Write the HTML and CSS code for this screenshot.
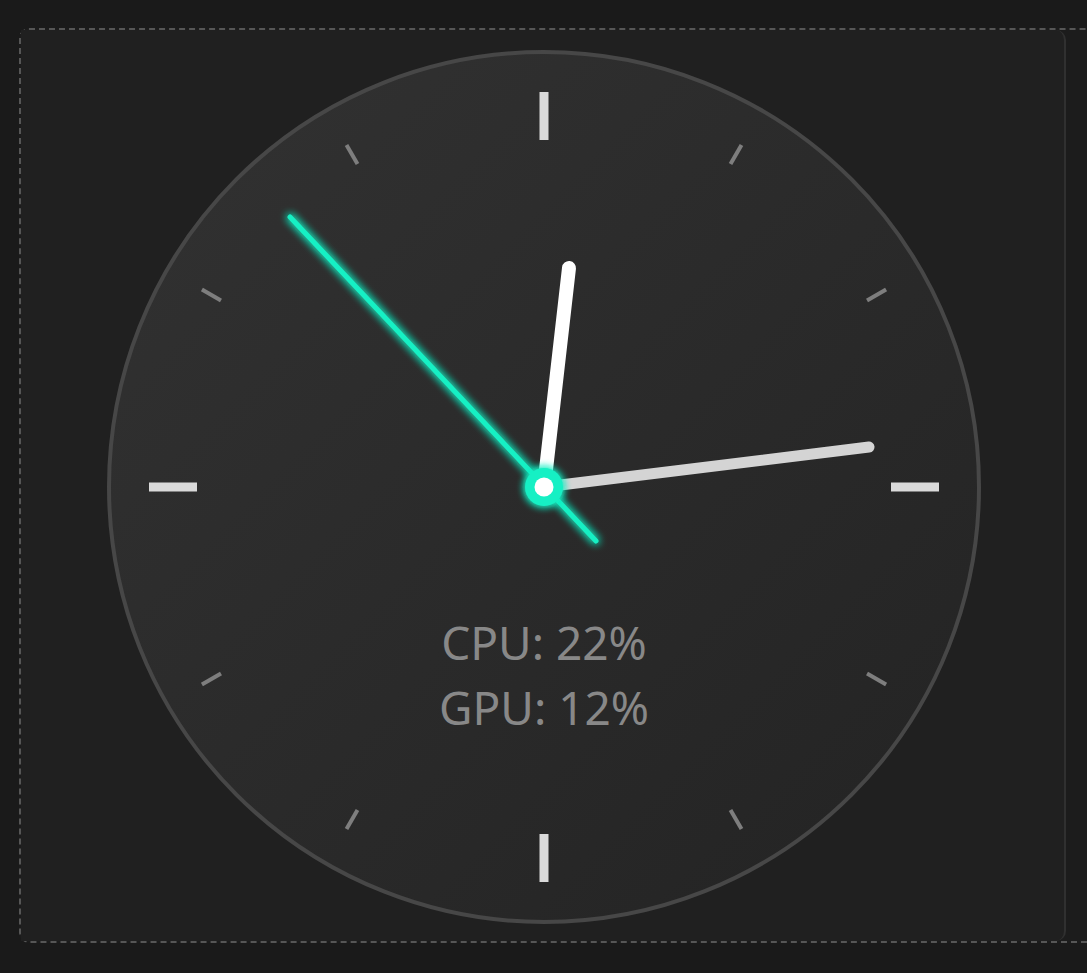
FILE: index.html
```html
<!DOCTYPE html>
<html>
<head>
<meta charset="utf-8">
<link rel="stylesheet" href="styles.css">
</head>
<body>
<div class="grid">
  <div class="card">
    <svg class="clock" width="880" height="880" viewBox="-440 -440 880 880">
      <defs>
        <linearGradient id="face" x1="0" y1="0" x2="1" y2="1">
          <stop offset="0" stop-color="#323232"/>
          <stop offset="1" stop-color="#232323"/>
        </linearGradient>
        <filter id="glow" x="-50%" y="-50%" width="200%" height="200%">
          <feGaussianBlur stdDeviation="4" result="b"/>
          <feMerge><feMergeNode in="b"/><feMergeNode in="b"/><feMergeNode in="SourceGraphic"/></feMerge>
        </filter>
      </defs>
      <circle cx="0" cy="0" r="435" fill="url(#face)" stroke="#474747" stroke-width="4"/>
      <g class="major">
        <line x1="0" y1="-395" x2="0" y2="-347"/>
        <line x1="0" y1="395" x2="0" y2="347"/>
        <line x1="-395" y1="0" x2="-347" y2="0"/>
        <line x1="395" y1="0" x2="347" y2="0"/>
      </g>
      <g class="minor">
        <line x1="0" y1="-395" x2="0" y2="-373" transform="rotate(30)"/>
        <line x1="0" y1="-395" x2="0" y2="-373" transform="rotate(60)"/>
        <line x1="0" y1="-395" x2="0" y2="-373" transform="rotate(120)"/>
        <line x1="0" y1="-395" x2="0" y2="-373" transform="rotate(150)"/>
        <line x1="0" y1="-395" x2="0" y2="-373" transform="rotate(210)"/>
        <line x1="0" y1="-395" x2="0" y2="-373" transform="rotate(240)"/>
        <line x1="0" y1="-395" x2="0" y2="-373" transform="rotate(300)"/>
        <line x1="0" y1="-395" x2="0" y2="-373" transform="rotate(330)"/>
      </g>
      <text class="stat" x="0" y="173" text-anchor="middle">CPU: 22%</text>
      <text class="stat" x="0" y="238" text-anchor="middle">GPU: 12%</text>
      <line class="minute" x1="0" y1="0" x2="325" y2="-40"/>
      <line class="hour" x1="0" y1="0" x2="25" y2="-219"/>
      <line class="second" x1="52" y1="54" x2="-254" y2="-270" filter="url(#glow)"/>
      <circle cx="0" cy="0" r="19" fill="#18f0c4" filter="url(#glow)"/>
      <circle cx="0" cy="0" r="9.5" fill="#ffffff"/>
    </svg>
  </div>
</div>
</body>
</html>
```
FILE: styles.css
```css
html, body {
  margin: 0;
  padding: 0;
  background: #1a1a1a;
  overflow: hidden;
  width: 1087px;
  height: 973px;
}
.grid {
  margin: 28px 0 0 19px;
  width: 1066px;
  height: 911px;
  border: 2px dashed #565656;
  border-right: none;
  border-radius: 10px 0 0 10px;
  background: #1c1c1c;
  display: flex;
}
.card {
  width: 1043px;
  height: 911px;
  background: #202020;
  border-right: 2px solid #303030;
  border-radius: 0 10px 10px 0;
  display: flex;
  align-items: center;
  justify-content: center;
}
.clock {
  display: block;
  margin-left: 2px;
  margin-top: 2px;
}
.major line {
  stroke: #dadada;
  stroke-width: 9;
}
.minor line {
  stroke: #7e7e7e;
  stroke-width: 4;
}
.stat {
  font-family: "Noto Sans", "Open Sans", sans-serif;
  font-size: 46px;
  fill: #888888;
}
.hour {
  stroke: #ffffff;
  stroke-width: 14;
  stroke-linecap: round;
}
.minute {
  stroke: #d4d4d4;
  stroke-width: 11;
  stroke-linecap: round;
}
.second {
  stroke: #18f0c4;
  stroke-width: 5;
  stroke-linecap: round;
}
```
